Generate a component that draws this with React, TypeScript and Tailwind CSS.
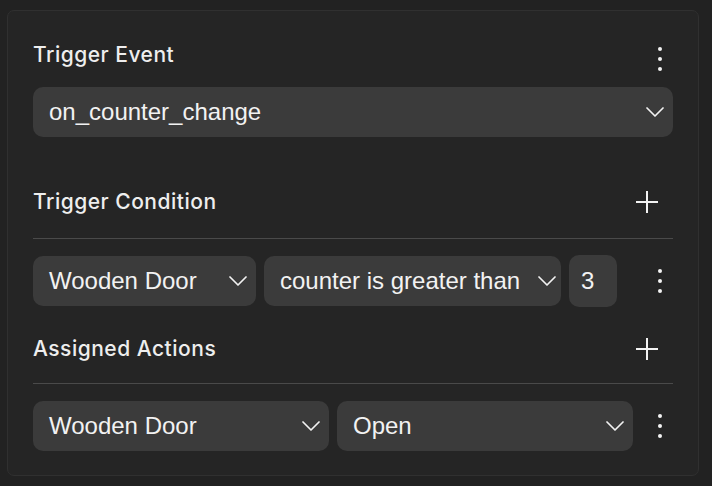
import React from "react";

const Chevron = () => (
  <svg width="18" height="10" viewBox="0 0 18 10" fill="none" className="shrink-0">
    <polyline points="1,1 9,9 17,1" stroke="#f2f2f2" strokeWidth="1.7" strokeLinecap="round" strokeLinejoin="round" />
  </svg>
);

const Dots = () => (
  <div className="w-[32px] flex justify-end pr-[11px] shrink-0">
    <svg width="4" height="24" viewBox="0 0 4 24" fill="#f2f2f2">
      <circle cx="2" cy="2" r="2" />
      <circle cx="2" cy="12" r="2" />
      <circle cx="2" cy="22" r="2" />
    </svg>
  </div>
);

const Plus = () => (
  <div className="mr-[15px]">
    <svg width="22" height="22" viewBox="0 0 22 22" fill="none">
      <line x1="11" y1="0" x2="11" y2="22" stroke="#f2f2f2" strokeWidth="2" />
      <line x1="0" y1="11" x2="22" y2="11" stroke="#f2f2f2" strokeWidth="2" />
    </svg>
  </div>
);

const Select = ({ label, className }: { label: string; className?: string }) => (
  <div
    className={
      "h-[50px] rounded-[10px] bg-[#3b3b3b] flex items-center justify-between pl-[16px] pr-[9px] gap-[18px] " +
      (className ?? "")
    }
  >
    <span className="text-[24px] leading-none text-[#f2f2f2] whitespace-nowrap" style={{ fontFamily: '"Liberation Sans", Arial, sans-serif' }}>
      {label}
    </span>
    <Chevron />
  </div>
);

const Header = ({ title }: { title: string }) => (
  <span
    className="text-[21px] leading-[28px] font-medium text-[#eeeeee] tracking-[0.5px]"
    style={{ fontFamily: 'Inter, "Noto Sans", sans-serif' }}
  >
    {title}
  </span>
);

export default function App() {
  return (
    <div className="w-[712px] h-[486px] bg-[#222222] pt-[10px] pl-[7px]">
      <div className="w-[692px] h-[466px] rounded-[7px] border border-[#303030] bg-[#252525] px-[25px] pt-[24px] flex flex-col">
        <div className="flex items-start justify-between">
          <div className="mt-[6px]">
            <Header title="Trigger Event" />
          </div>
          <div className="mt-[12px]">
            <Dots />
          </div>
        </div>
        <Select label="on_counter_change" className="mt-[16px] w-full" />

        <div className="mt-[50px] h-[30px] flex items-center justify-between">
          <Header title="Trigger Condition" />
          <Plus />
        </div>
        <div className="mt-[21px] h-[1px] bg-[#4a4a4a]" />
        <div className="mt-[17px] flex items-center gap-[8px]">
          <Select label="Wooden Door" className="w-[223px]" />
          <Select label="counter is greater than" className="w-[297px]" />
          <div className="w-[48px] h-[52px] -my-[1px] rounded-[10px] bg-[#3b3b3b] flex items-center pl-[12px]">
            <span className="text-[24px] leading-none text-[#f2f2f2]" style={{ fontFamily: '"Liberation Sans", Arial, sans-serif' }}>
              3
            </span>
          </div>
          <div className="flex-1" />
          <Dots />
        </div>

        <div className="mt-[28px] h-[30px] flex items-center justify-between">
          <Header title="Assigned Actions" />
          <Plus />
        </div>
        <div className="mt-[19px] h-[1px] bg-[#4a4a4a]" />
        <div className="mt-[17px] flex items-center gap-[8px]">
          <Select label="Wooden Door" className="flex-1 min-w-0" />
          <Select label="Open" className="flex-1 min-w-0" />
          <Dots />
        </div>
      </div>
    </div>
  );
}
